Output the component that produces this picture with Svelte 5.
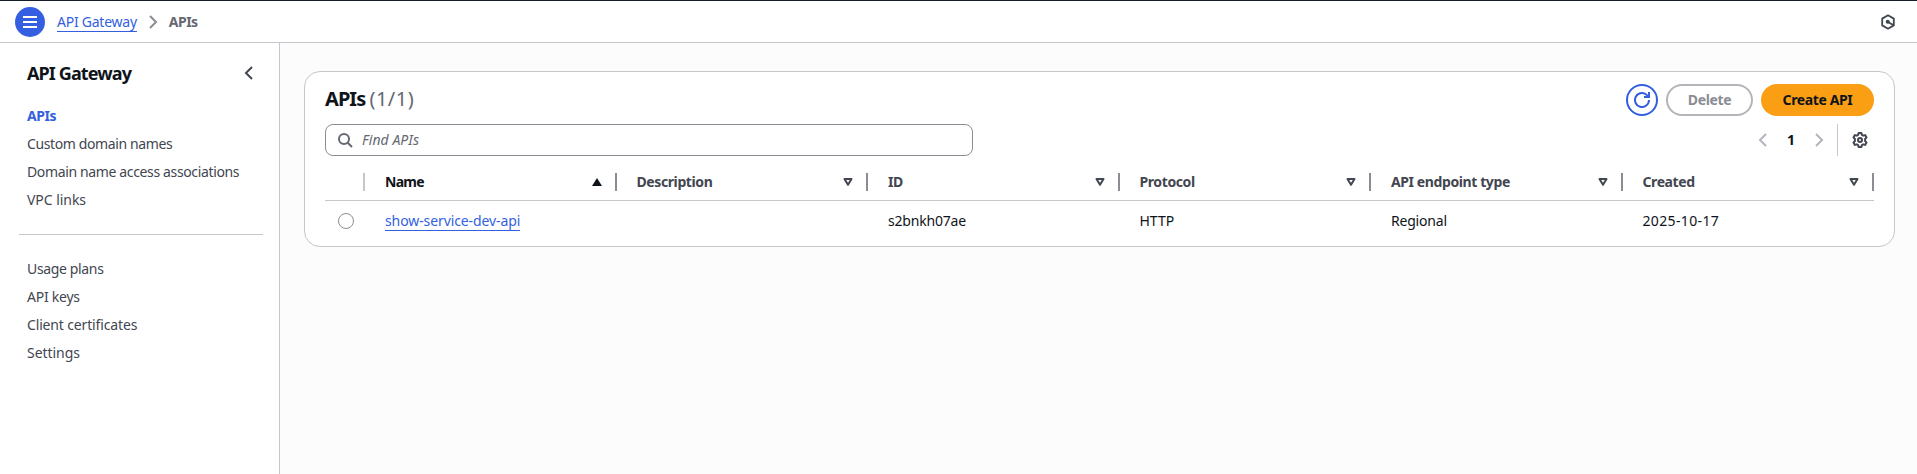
<script>
  const primaryLinks = [
    { label: 'APIs', active: true, tracking: '-0.45px' },
    { label: 'Custom domain names', tracking: '-0.38px' },
    { label: 'Domain name access associations', tracking: '-0.36px' },
    { label: 'VPC links', tracking: '-0.05px' }
  ];
  const secondaryLinks = [
    { label: 'Usage plans', tracking: '-0.35px' },
    { label: 'API keys', tracking: '-0.25px' },
    { label: 'Client certificates', tracking: '-0.15px' },
    { label: 'Settings', tracking: '-0.05px' }
  ];
  const columns = [
    { label: 'Name', sorted: true, tracking: '-0.7px' },
    { label: 'Description', tracking: '-0.4px' },
    { label: 'ID', tracking: '-0.4px' },
    { label: 'Protocol', tracking: '-0.4px' },
    { label: 'API endpoint type', tracking: '-0.4px' },
    { label: 'Created', tracking: '-0.4px' }
  ];
  const rows = [
    [
      { text: 'show-service-dev-api', link: true, tracking: '-0.1px' },
      { text: '' },
      { text: 's2bnkh07ae', tracking: '-0.2px' },
      { text: 'HTTP', tracking: '0px' },
      { text: 'Regional', tracking: '-0.2px' },
      { text: '2025-10-17', tracking: '0.36px' }
    ]
  ];
</script>

<div class="page">
  <header>
    <button class="menu" aria-label="Menu">
      <svg width="14" height="12" viewBox="0 0 14 12"><path d="M0 1h14M0 6h14M0 11h14" stroke="#fff" stroke-width="2" /></svg>
    </button>
    <a class="crumb" href="#top">API Gateway</a>
    <svg class="crumb-sep" width="16" height="16" viewBox="0 0 16 16"><path d="m5 2 6 6-6 6" /></svg>
    <span class="crumb-now">APIs</span>
    <svg class="assist" width="16" height="16" viewBox="0 0 16 16">
      <path d="M8 1.3 13.8 4.6v6.8L8 14.7l-5.8-3.3V4.6Z" fill="none" stroke="#424650" stroke-width="1.8" stroke-linejoin="round" />
      <circle cx="7.7" cy="7.8" r="2" fill="#424650" />
      <path d="m8 8 5.2 3.1" stroke="#424650" stroke-width="1.8" />
    </svg>
  </header>

  <div class="body">
    <nav>
      <div class="nav-head">
        <h2>API Gateway</h2>
        <svg width="16" height="16" viewBox="0 0 16 16"><path d="M11 2 5 8l6 6" /></svg>
      </div>
      <ul>
        {#each primaryLinks as item}
          <li class:active={item.active} style:letter-spacing={item.tracking}>{item.label}</li>
        {/each}
      </ul>
      <hr />
      <ul>
        {#each secondaryLinks as item}
          <li style:letter-spacing={item.tracking}>{item.label}</li>
        {/each}
      </ul>
    </nav>

    <main>
      <section class="card">
        <div class="title-row">
          <h1>APIs <span>(1/1)</span></h1>
          <div class="actions">
            <button class="refresh" aria-label="Refresh">
              <svg width="16" height="16" viewBox="0 0 16 16"><path d="M15 8a7 7 0 1 1-2-4.900l2 1.900M15 0v5h-5" /></svg>
            </button>
            <button class="delete">Delete</button>
            <button class="create">Create API</button>
          </div>
        </div>

        <div class="filter-row">
          <div class="search">
            <svg width="16" height="16" viewBox="0 0 16 16"><circle cx="7" cy="7" r="5" /><path d="m10.700 10.700 4.300 4.300" /></svg>
            <span>Find APIs</span>
          </div>
          <div class="pager">
            <svg class="arrow" width="16" height="16" viewBox="0 0 16 16"><path d="M11 2 5 8l6 6" /></svg>
            <b>1</b>
            <svg class="arrow" width="16" height="16" viewBox="0 0 16 16"><path d="m5 2 6 6-6 6" /></svg>
            <i class="rule"></i>
            <svg class="gear" width="16" height="16" viewBox="0 0 16 16">
              <path d="M6.600 1h2.800l.5 1.900 1.300.75 1.900-.55 1.400 2.400-1.400 1.400v2.200l1.400 1.400-1.400 2.400-1.900-.55-1.300.75-.5 1.900H6.600l-.5-1.900-1.300-.75-1.900.55-1.400-2.400 1.400-1.400V6.900L1.500 5.500l1.400-2.400 1.900.55 1.300-.75Z" />
              <circle cx="8" cy="8" r="2" />
            </svg>
          </div>
        </div>

        <div class="grid head">
          <div class="pick"></div>
          {#each columns as col}
            <div class="th" class:sorted={col.sorted}>
              <span style:letter-spacing={col.tracking}>{col.label}</span>
              <svg width="10" height="8" viewBox="0 0 10 8">
                {#if col.sorted}
                  <path d="M5 0 10 8H0Z" fill="#0f141a" />
                {:else}
                  <path d="M1.500 1h7L5 6.800Z" fill="none" stroke="#424650" stroke-width="2" stroke-linejoin="round" />
                {/if}
              </svg>
            </div>
          {/each}
        </div>
        {#each rows as row}
          <div class="grid row">
            <div class="pick"><span class="radio"></span></div>
            {#each row as cell}
              <div class="td">
                <span class:link={cell.link} style:letter-spacing={cell.tracking}>{cell.text}</span>
              </div>
            {/each}
          </div>
        {/each}
      </section>
    </main>
  </div>
</div>

<style>
  :global(body) { margin: 0; }
  * { box-sizing: border-box; }
  .page {
    height: 474px;
    display: flex;
    flex-direction: column;
    overflow: hidden;
    background: #fcfcfd;
    font: 14px/20px "Noto Sans", "Open Sans", sans-serif;
    color: #0f141a;
  }
  header {
    height: 43px;
    flex: none;
    display: flex;
    align-items: center;
    padding: 0 21px 0 15px;
    background: #fff;
    border-top: 1px solid #161d26;
    border-bottom: 1px solid #c6c6cd;
  }
  button { font: inherit; padding: 0; margin: 0; }
  svg { flex: none; display: block; }
  .menu {
    width: 30px;
    height: 30px;
    border: 0;
    border-radius: 50%;
    background: #335fe0;
    display: grid;
    place-items: center;
  }
  .crumb {
    margin-left: 12px;
    height: 21px;
    line-height: 21px;
    color: #335fe0;
    text-decoration: none;
    border-bottom: 1px solid #335fe0;
    letter-spacing: -0.25px;
  }
  .crumb-sep { margin: 0 8px; fill: none; stroke: #8c8c94; stroke-width: 2; }
  .crumb-now { font-weight: 700; color: #656871; letter-spacing: -0.5px; }
  .assist { margin-left: auto; }
  .body { flex: 1; display: flex; min-height: 0; }
  nav {
    width: 280px;
    flex: none;
    background: #fff;
    border-right: 1px solid #c6c6cd;
    padding: 18px 16px 0 19px;
  }
  .nav-head {
    display: flex;
    justify-content: space-between;
    align-items: center;
    height: 24px;
    padding: 0 6px 0 8px;
  }
  .nav-head svg { fill: none; stroke: #424650; stroke-width: 2; }
  h2 { margin: 0; font-size: 18px; line-height: 22px; letter-spacing: -0.88px; }
  ul { list-style: none; margin: 0; padding: 0 0 0 8px; }
  .nav-head + ul { margin-top: 21px; }
  li { height: 20px; margin-bottom: 8px; color: #424650; white-space: nowrap; }
  li.active { color: #335fe0; font-weight: 700; }
  hr { border: 0; height: 1px; background: #c6c6cd; margin: 24px 0; }
  main { flex: 1; padding: 28px 22px 0 24px; }
  .card {
    height: 176px;
    border: 1px solid #c6c6cd;
    border-radius: 16px;
    background: #fff;
    padding: 12px 20px 0;
  }
  .title-row, .filter-row { display: flex; justify-content: space-between; height: 32px; }
  h1 { margin: 0; font-size: 20px; line-height: 30px; letter-spacing: -0.95px; }
  h1 span { font-weight: 400; color: #656871; letter-spacing: 0.45px; }
  .actions { display: flex; gap: 8px; }
  .actions button { height: 32px; border-radius: 16px; font-weight: 700; letter-spacing: -0.38px; }
  .actions .refresh {
    width: 32px;
    border: 2px solid #335fe0;
    background: #fff;
    display: grid;
    place-items: center;
  }
  .refresh svg { fill: none; stroke: #335fe0; stroke-width: 2; }
  .actions .delete { width: 87px; border: 2px solid #b4b4bb; color: #8c8c94; background: #fff; }
  .actions .create { width: 113px; border: 0; background: #fa9e14; color: #0f141a; }
  .filter-row { margin-top: 8px; }
  .search {
    width: 648px;
    border: 1px solid #8c8c94;
    border-radius: 8px;
    display: flex;
    align-items: center;
    gap: 9px;
    padding: 0 11px;
    color: #656871;
    font-style: italic;
    letter-spacing: 0.05px;
  }
  .search svg { fill: none; stroke: #656871; stroke-width: 2; }
  .pager { display: flex; align-items: center; padding-right: 6px; }
  .pager b { width: 40px; text-align: center; }
  .pager svg { fill: none; stroke: #b4b4bb; stroke-width: 2; }
  .rule { width: 1px; height: 32px; background: #c6c6cd; margin: 0 14px 0 10px; }
  .pager .gear { stroke: #424650; stroke-linejoin: round; }
  .grid { display: grid; grid-template-columns: 40px repeat(6, 1fr); }
  .head { margin-top: 8px; height: 37px; border-bottom: 1px solid #c6c6cd; }
  .head > div { height: 18px; margin-top: 9px; border-right: 2px solid #8c8c94; }
  .head > .pick { border-color: #c6c6cd; }
  .th {
    display: flex;
    align-items: center;
    justify-content: space-between;
    padding: 0 13px 0 20px;
    font-weight: 700;
    color: #424650;
  }
  .th.sorted { color: #0f141a; }
  .row { height: 40px; align-items: center; }
  .row .pick { padding-left: 13px; }
  .radio { display: block; width: 16px; height: 16px; border: 1px solid #8c8c94; border-radius: 50%; }
  .td { height: 20px; padding-left: 20px; white-space: nowrap; }
  .link { color: #335fe0; display: inline-block; height: 20px; line-height: 20px; border-bottom: 1px solid #335fe0; }
</style>
